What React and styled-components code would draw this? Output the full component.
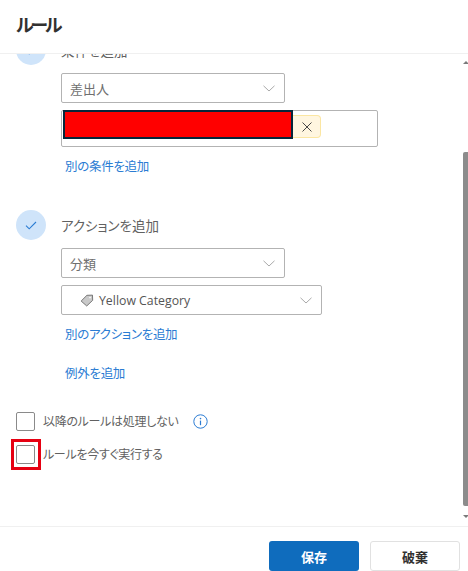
import React from 'react';
import styled, { createGlobalStyle } from 'styled-components';

const GlobalStyle = createGlobalStyle`
    html, body {
        margin: 0;
        padding: 0;
        background: #fff;
    }
    *, *::before, *::after {
        box-sizing: border-box;
    }
`

const Chevron = () => (
    <svg width="12" height="7" viewBox="0 0 12 7" fill="none">
        <path d="M.5.8L6 6l5.500-5.200" stroke="#a9a9a9" strokeWidth="1" />
    </svg>
);

const Check = () => (
    <svg width="12" height="9" viewBox="0 0 12 9" fill="none">
        <path d="M1 4.6L4.2 7.800 11 1" stroke="#2b7cd3" strokeWidth="1.1" />
    </svg>
);

const Tag = () => (
    <svg width="14" height="13" viewBox="0 0 15 14" fill="none">
        <path d="M1.200 7.600L7.400 1.400 13.400 1.200 13.600 6.800 7.200 12.900Z" fill="#c9c9c9" stroke="#6f6f6f" strokeWidth="1" strokeLinejoin="round" />
        <circle cx="10.800" cy="3.800" r="0.9" fill="#fff" />
    </svg>
);

const Cross = () => (
    <svg width="10" height="10" viewBox="0 0 10 10" fill="none">
        <path d="M.5.5l9 9M9.500.5l-9 9" stroke="#4a4a4a" strokeWidth="1" />
    </svg>
);

const Info = () => (
    <svg width="15" height="15" viewBox="0 0 15 15" fill="none">
        <circle cx="7.500" cy="7.500" r="6.700" stroke="#2b7cd3" strokeWidth="1" />
        <circle cx="7.500" cy="4.600" r=".8" fill="#2b7cd3" />
        <path d="M7.500 6.600v4.600" stroke="#2b7cd3" strokeWidth="1.200" />
    </svg>
);

const App = () => {
    return (
        <>
            <GlobalStyle />
            <Panel>
                <Header>
                    <Title>ルール</Title>
                </Header>
                <Body>
                    <Content>
                        <StepHead>
                            <StepCircle><Check /></StepCircle>
                            <StepTitle>条件を追加</StepTitle>
                        </StepHead>
                        <StepBody>
                            <Select>
                                <SelectText>差出人</SelectText>
                                <Chevron />
                            </Select>
                            <TagInput>
                                <Redacted />
                                <TagRemove><Cross /></TagRemove>
                            </TagInput>
                            <LinkText>別の条件を追加</LinkText>
                        </StepBody>

                        <StepHead $second>
                            <StepCircle><Check /></StepCircle>
                            <StepTitle>アクションを追加</StepTitle>
                        </StepHead>
                        <StepBody>
                            <Select>
                                <SelectText>分類</SelectText>
                                <Chevron />
                            </Select>
                            <Select $wide>
                                <CategoryValue>
                                    <Tag />
                                    <CategoryText>Yellow Category</CategoryText>
                                </CategoryValue>
                                <Chevron />
                            </Select>
                            <LinkText>別のアクションを追加</LinkText>
                            <LinkText $exception>例外を追加</LinkText>
                        </StepBody>

                        <Options>
                            <OptionRow>
                                <CheckBox />
                                <OptionText>以降のルールは処理しない</OptionText>
                                <InfoWrap><Info /></InfoWrap>
                            </OptionRow>
                            <OptionRow>
                                <CheckBox $marked />
                                <OptionText>ルールを今すぐ実行する</OptionText>
                            </OptionRow>
                        </Options>
                    </Content>
                    <Scrollbar>
                        <ArrowUp />
                        <Thumb />
                        <ArrowDown />
                    </Scrollbar>
                </Body>
                <Footer>
                    <SaveButton>保存</SaveButton>
                    <DiscardButton>破棄</DiscardButton>
                </Footer>
            </Panel>
        </>
    )
}

export default App;

const Panel = styled.div`
    width: 468px;
    height: 571px;
    display: flex;
    flex-direction: column;
    overflow: hidden;
    background: #fff;
    font-family: "Open Sans", "Noto Sans CJK JP", sans-serif;
    font-feature-settings: "palt";
    font-size: 13px;
    color: #616161;
`

const Header = styled.header`
    height: 54px;
    flex-shrink: 0;
    padding: 10px 16px 0;
    border-bottom: 1px solid #f0f0f0;
    position: relative;
    z-index: 1;
    background: #fff;
`

const Title = styled.h1`
    margin: 0;
    font-size: 18px;
    letter-spacing: -3px;
    line-height: 30px;
    font-weight: 600;
    color: #323130;
`

const Body = styled.div`
    flex: 1;
    min-height: 0;
    display: flex;
    overflow: hidden;
`

const Content = styled.div`
    flex: 1;
    min-width: 0;
    margin-top: -19px;
    padding-left: 16px;
`

const StepHead = styled.div`
    display: flex;
    align-items: center;
    height: 30px;
    gap: 15px;
    margin-top: ${({ $second }) => ($second ? '32px' : '0')};
`

const StepCircle = styled.div`
    width: 30px;
    height: 30px;
    border-radius: 50%;
    background: #cfe4fa;
    display: flex;
    align-items: center;
    justify-content: center;
`

const StepTitle = styled.div`
    font-size: 13.5px;
    color: #616161;
`

const StepBody = styled.div`
    padding-left: 45px;
    margin-top: 8px;
    display: flex;
    flex-direction: column;
    align-items: flex-start;
`

const Select = styled.div`
    width: ${({ $wide }) => ($wide ? '261px' : '224px')};
    height: 30px;
    margin-bottom: 7px;
    padding: 0 9px 0 8px;
    border: 1px solid #b3b3b3;
    border-radius: 2px;
    display: flex;
    align-items: center;
    justify-content: space-between;
`

const SelectText = styled.span`
    font-size: 13px;
    color: #6f6f6f;
`

const CategoryValue = styled.span`
    display: flex;
    align-items: center;
    gap: 5px;
    padding-left: 10px;
`

const CategoryText = styled.span`
    font-size: 12.3px;
    color: #555;
`

const TagInput = styled.div`
    width: 317px;
    height: 37px;
    margin-bottom: 7px;
    border: 1px solid #b3b3b3;
    border-radius: 2px;
    display: flex;
    align-items: flex-start;
    padding-left: 1px;
`

const Redacted = styled.div`
    width: 230px;
    height: 29px;
    margin-top: -1px;
    background: #ff0000;
    border: 2px solid #07263a;
`

const TagRemove = styled.div`
    width: 28px;
    height: 23px;
    margin-top: 4px;
    background: #fff6e0;
    border: 1px solid #fbe6a2;
    border-left: none;
    border-radius: 0 4px 4px 0;
    display: flex;
    align-items: center;
    justify-content: center;
`

const LinkText = styled.div`
    margin: ${({ $exception }) => ($exception ? '17px 0 0' : '2px 0 0')};
    padding-left: 4px;
    height: 22px;
    line-height: 22px;
    font-size: 12.5px;
    letter-spacing: -0.3px;
    color: #2b7cd3;
`

const Options = styled.div`
    margin-top: 26px;
    display: flex;
    flex-direction: column;
    gap: 13px;
`

const OptionRow = styled.div`
    display: flex;
    align-items: center;
    height: 20px;
    gap: 8px;
`

const CheckBox = styled.div`
    width: 19px;
    height: 19px;
    border: 1px solid #8a8a8a;
    border-radius: 2px;
    position: relative;

    ${({ $marked }) => $marked && `
        &::after {
            content: '';
            position: absolute;
            left: -6px;
            top: -7px;
            width: 30px;
            height: 31px;
            border: 3px solid #e60012;
        }
    `}
`

const OptionText = styled.span`
    font-size: 12px;
    letter-spacing: -0.3px;
    color: #616161;
`

const InfoWrap = styled.span`
    display: flex;
    margin-left: 6px;
`

const Scrollbar = styled.div`
    width: 5px;
    flex-shrink: 0;
    display: flex;
    flex-direction: column;
    align-items: center;
    padding-top: 7px;
`

const ArrowUp = styled.div`
    width: 0;
    height: 0;
    border-left: 3px solid transparent;
    border-right: 3px solid transparent;
    border-bottom: 3px solid #7a7a7a;
`

const Thumb = styled.div`
    width: 5px;
    height: 354px;
    margin-top: 88px;
    background: #8c8c8c;
    border-radius: 2px 0 0 2px;
`

const ArrowDown = styled.div`
    width: 0;
    height: 0;
    margin-top: 9px;
    border-left: 3px solid transparent;
    border-right: 3px solid transparent;
    border-top: 3px solid #7a7a7a;
`

const Footer = styled.footer`
    height: 45px;
    flex-shrink: 0;
    border-top: 1px solid #f0f0f0;
    display: flex;
    justify-content: flex-end;
    align-items: flex-start;
    gap: 11px;
    padding: 14px 8px 0 0;
`

const SaveButton = styled.button`
    width: 90px;
    height: 30px;
    border: none;
    border-radius: 3px;
    background: #0f6cbd;
    color: #fff;
    font-family: inherit;
    font-size: 13px;
    font-weight: 700;
`

const DiscardButton = styled.button`
    width: 90px;
    height: 30px;
    border: 1px solid #e1e1e1;
    border-radius: 3px;
    background: #fff;
    color: #323130;
    font-family: inherit;
    font-size: 13px;
    font-weight: 700;
`
